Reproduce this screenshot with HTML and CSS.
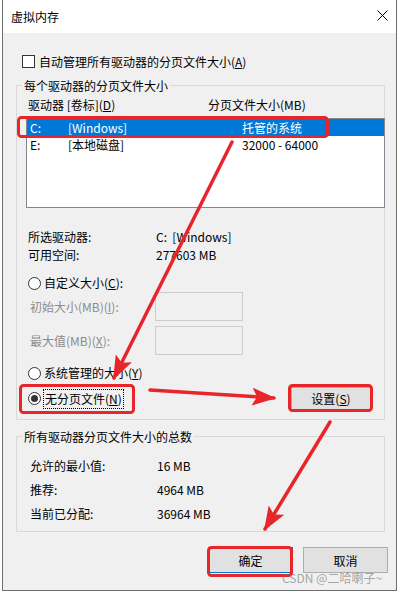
FILE: index.html
```html
<!DOCTYPE html>
<html>
	<head>
		<meta charset="utf-8">
		<title>虚拟内存</title>
		<link rel="stylesheet" href="styles.css">
	</head>
	<body>
		<div class="window">
			<div class="titlebar">
				<span class="title">虚拟内存</span>
				<svg class="close" width="11" height="11" viewBox="0 0 11 11"><path d="M0.5 0.5 L10.5 10.5 M10.5 0.5 L0.5 10.5" stroke="#000" stroke-width="1"/></svg>
			</div>
			<div class="content">
				<div class="check-row"><span class="checkbox"></span>自动管理所有驱动器的分页文件大小(<u>A</u>)</div>

				<fieldset class="group">
					<legend>每个驱动器的分页文件大小</legend>
					<div class="group-body">
						<div class="cols"><span>驱动器 [卷标](<u>D</u>)</span><span>分页文件大小(MB)</span></div>
						<div class="listbox">
							<div class="drive sel"><span>C:</span><span>[Windows]</span><span>托管的系统</span></div>
							<div class="drive"><span>E:</span><span>[本地磁盘]</span><span>32000 - 64000</span></div>
						</div>
						<div class="info">
							<span>所选驱动器:</span><span>C:&nbsp; [Windows]</span>
							<span>可用空间:</span><span>277603 MB</span>
						</div>
						<div class="radio-row first"><span class="radio"></span>自定义大小(<u>C</u>):</div>
						<div class="size-row"><span class="size-label">初始大小(MB)(<u>I</u>):</span><span class="size-box"></span></div>
						<div class="size-row second"><span class="size-label">最大值(MB)(<u>X</u>):</span><span class="size-box"></span></div>
						<div class="radio-row managed"><span class="radio"></span>系统管理的大小(<u>Y</u>)</div>
						<div class="set-row">
							<div class="radio-row"><span class="radio on"></span><span class="focus">无分页文件(<u>N</u>)</span></div>
							<button class="btn set">设置(<u>S</u>)</button>
						</div>
					</div>
				</fieldset>

				<fieldset class="group total">
					<legend>所有驱动器分页文件大小的总数</legend>
					<div class="totals">
						<span>允许的最小值:</span><span>16 MB</span>
						<span>推荐:</span><span>4964 MB</span>
						<span>当前已分配:</span><span>36964 MB</span>
					</div>
				</fieldset>

				<div class="actions">
					<button class="btn ok">确定</button>
					<button class="btn">取消</button>
				</div>
			</div>
		</div>

		<!-- red marks drawn on top of the screenshot -->
		<svg class="marks" width="399" height="593" viewBox="0 0 399 593">
			<defs>
				<marker id="head" markerUnits="userSpaceOnUse" markerWidth="24" markerHeight="18" refX="22" refY="9" orient="auto">
					<path d="M0 0 L24 9 L0 18 L5 9 z" fill="#e8262a"/>
				</marker>
			</defs>
			<g fill="none" stroke="#e8262a" stroke-width="3">
				<rect x="18.5" y="117.5" width="309" height="19" rx="3"/>
				<rect x="20.5" y="385.5" width="113" height="27" rx="3"/>
				<rect x="289.5" y="385.5" width="82" height="25" rx="3"/>
				<rect x="208.5" y="547.5" width="83" height="28" rx="3"/>
			</g>
			<g stroke="#e8262a" stroke-width="3.5" stroke-linecap="round">
				<line x1="232" y1="142" x2="114" y2="378" marker-end="url(#head)"/>
				<line x1="150" y1="390" x2="274" y2="398" marker-end="url(#head)"/>
				<line x1="330" y1="422" x2="265" y2="529" marker-end="url(#head)"/>
			</g>
		</svg>
		<div class="watermark">CSDN @二哈喇子~</div>
	</body>
</html>
```

FILE: styles.css
```css
*{
	margin: 0;
	padding: 0;
	box-sizing: border-box;
}
body{
	width: 399px;
	height: 593px;
	position: relative;
	overflow: hidden;
	background: #fff;
	font: 12px "Noto Sans CJK SC", "Noto Sans", sans-serif;
	color: #000;
}
u{
	text-decoration: underline;
	text-underline-offset: 1px;
}
.window{
	margin-left: 2px;
	width: 395px;
	height: 591px;
	background: #f0f0f0;
	border: 1px solid #6e6e6e;
	border-top: none;
}
.titlebar{
	height: 33px;
	background: #fff;
	display: flex;
	align-items: center;
	justify-content: space-between;
	padding: 0 8px 0 8px;
}
.title{
	line-height: 17px;
}
.close{
	margin-top: -2px;
}
.content{
	padding: 0 11px 0 13px;
}
.check-row{
	display: flex;
	align-items: center;
	margin-top: 20px;
	padding-left: 6px;
	line-height: 17px;
}
.checkbox{
	width: 13px;
	height: 13px;
	border: 1px solid #333;
	background: #fff;
	margin-right: 4px;
}
.group{
	border: 1px solid #d9d9d9;
	margin-top: 7px;
	min-width: 0;
}
.group legend{
	margin-left: 5px;
	padding: 0 2px;
	line-height: 17px;
}
.group-body{
	padding: 2px 13px 9px 11px;
}
.cols{
	display: grid;
	grid-template-columns: 180px 1fr;
	line-height: 17px;
}
.listbox{
	margin: 5px 0 0 -2px;
	width: 359px;
	height: 90px;
	border: 1px solid #828790;
	background: #fff;
}
.drive{
	display: grid;
	grid-template-columns: 38px 174px 1fr;
	padding-left: 3px;
	line-height: 17px;
}
.drive.sel{
	background: #0078d7;
	color: #fff;
}
.info{
	display: grid;
	grid-template-columns: 128px 1fr;
	line-height: 18px;
	margin-top: 20px;
}
.radio-row{
	display: flex;
	align-items: center;
	line-height: 18px;
}
.radio-row.first{
	margin-top: 10px;
}
.radio-row.managed{
	margin-top: 9px;
}
.radio{
	width: 13px;
	height: 13px;
	border: 1px solid #333;
	border-radius: 50%;
	background: #fff;
	margin-right: 3px;
	display: flex;
	align-items: center;
	justify-content: center;
}
.radio.on::after{
	content: "";
	width: 7px;
	height: 7px;
	border-radius: 50%;
	background: #333;
}
.focus{
	outline: 1px dotted #000;
	outline-offset: 0;
	padding: 0 1px;
}
.size-row{
	display: flex;
	align-items: center;
	padding-left: 2px;
	color: #8c8c8c;
}
.size-row.second{
	margin-top: 5px;
}
.size-label{
	width: 125px;
}
.size-box{
	width: 88px;
	height: 29px;
	border: 1px solid #cccccc;
}
.set-row{
	display: flex;
	align-items: center;
	justify-content: space-between;
	margin-top: 5px;
}
.btn{
	font: inherit;
	color: #000;
	background: #e1e1e1;
	border: 1px solid #adadad;
	height: 26px;
	width: 85px;
}
.btn.set{
	width: 80px;
	height: 23px;
}
.group.total{
	margin-top: 8px;
}
.totals{
	display: grid;
	grid-template-columns: 127px 1fr;
	line-height: 24px;
	padding: 9px 0 5px 13px;
}
.actions{
	display: flex;
	justify-content: flex-end;
	gap: 10px;
	margin: 15px -3px 0 0;
}
.btn.ok{
	border-color: #0078d7;
}
.marks{
	position: absolute;
	left: 0;
	top: 0;
}
.watermark{
	position: absolute;
	left: 282px;
	top: 570px;
	font-size: 12px;
	line-height: 16px;
	color: rgba(120, 120, 120, 0.65);
}
```
